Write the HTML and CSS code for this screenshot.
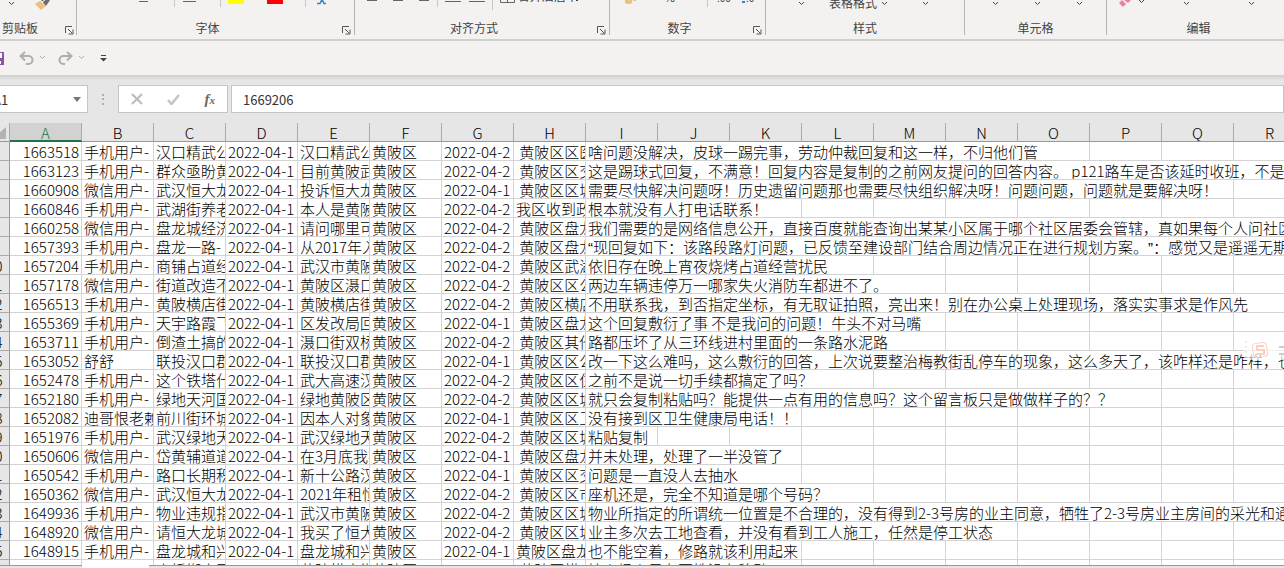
FILE: index.html
```html
<!DOCTYPE html>
<html lang="zh-CN">
<head>
<meta charset="utf-8">
<title>工作表</title>
<link rel="stylesheet" href="styles.css">
</head>
<body>
<header class="ribbon">
  <section class="group g-clip">
    <svg class="tools" aria-hidden="true"><path class="chev" d="M9 2l2.500 2.500 2.500-2.500"/><path d="M35 4l6 6 5-4-6-5z" fill="#ebc07c"/><path d="M41 0l5 6 4-6z" fill="#6b6b6b"/><path d="M42 2l3-2" stroke="#fff"/></svg>
    <div class="caption"><span>剪贴板</span><button class="launch" aria-label="剪贴板设置"><svg viewBox="0 0 9 9"><path d="M.5 7V.5H7M3 3l4 4M8 3.500V8H3.500"/></svg></button></div>
  </section>
  <section class="group g-font">
    <svg class="tools" aria-hidden="true"><path d="M62 1.500h9M106 1.500h13" stroke="#666"/><path class="sep" d="M97.500 0v7M143.500 0v7M228.500 0v7"/><path d="M151 0h16v4h-16z" fill="#ff0"/><path d="M190 0h16v4h-16z" fill="#f00"/><path d="M240 3.500h3l2-4 2 4h2" fill="none" stroke="#3f7fc4" stroke-width="1.500"/></svg>
    <div class="caption"><span>字体</span><button class="launch" aria-label="字体设置"><svg viewBox="0 0 9 9"><path d="M.5 7V.5H7M3 3l4 4M8 3.500V8H3.500"/></svg></button></div>
  </section>
  <section class="group g-align">
    <svg class="tools" aria-hidden="true"><path d="M12 .5h10M38 .5h10M64 .5h10M90 1.500h16M114 1.500h16" stroke="#666"/><path class="sep" d="M82.500 0v7M137.500 0v10"/><path d="M145.500 0v2.500h14V0M152.500 0v2" fill="none" stroke="#666"/><text x="163" y="1">合并后居中</text><path class="chev" d="M220-1l2 2 2-2"/></svg>
    <div class="caption"><span>对齐方式</span><button class="launch" aria-label="对齐设置"><svg viewBox="0 0 9 9"><path d="M.5 7V.5H7M3 3l4 4M8 3.500V8H3.500"/></svg></button></div>
  </section>
  <section class="group g-num">
    <svg class="tools" aria-hidden="true"><path d="M15 0h7v3l-2 1h-3l-2-1zM23 0h3v1h-3z" fill="#ebc07c"/><text x="54" y="2">%</text><path class="sep" d="M97.500 0v7"/><text x="107" y="2" font-size="10">.00</text><path d="M132 2h3" stroke="#3f7fc4" stroke-width="2"/><text x="136" y="2" font-size="10">.0</text></svg>
    <div class="caption"><span>数字</span><button class="launch" aria-label="数字设置"><svg viewBox="0 0 9 9"><path d="M.5 7V.5H7M3 3l4 4M8 3.500V8H3.500"/></svg></button></div>
  </section>
  <section class="group g-style">
    <svg class="tools" aria-hidden="true"><path class="chev" d="M33 2l2.500 2.500L38 2M116 2l2.500 2.500L121 2M157 2l2.500 2.500L162 2"/><text x="63" y="8">表格格式</text></svg>
    <div class="caption"><span>样式</span></div>
  </section>
  <section class="group g-cell">
    <svg class="tools" aria-hidden="true"><path class="chev" d="M28 2l2.500 2.500L33 2M70 2l2.500 2.500L75 2M112 2l2.500 2.500L117 2"/></svg>
    <div class="caption"><span>单元格</span></div>
  </section>
  <section class="group g-edit">
    <svg class="tools" aria-hidden="true"><path d="M12 3l4 4 3-3-4-4zM17 0l4 3 3-3z" fill="#e8819a"/><path class="chev" d="M32 0l2.500 2.500L37 0M77 2l2.500 2.500L82 2M142 2l2.500 2.500L147 2"/></svg>
    <div class="caption"><span>编辑</span></div>
  </section>
</header>
<nav class="quick" aria-label="快速访问工具栏">
  <button class="save" aria-label="保存"><svg width="4" height="13"><path d="M0 0h4v13H0z" fill="#8a55a8"/><path d="M0 1h2v5H0zM0 9h1v3H0z" fill="#fff"/></svg></button>
  <button class="undo" aria-label="撤消"><svg width="28" height="15"><path d="M6 1L1.500 5 6 9.500M2 5h7.500a4 4 0 0 1 0 8H7" class="arrow"/><path d="M21 5l2.500 2.500L26 5" class="soft"/></svg></button>
  <button class="redo" aria-label="恢复"><svg width="28" height="15"><path d="M9 1l4.500 4L9 9.500M13 5H5.500a4 4 0 0 0 0 8H7" class="arrow"/><path d="M21 5l2.500 2.500L26 5" class="soft"/></svg></button>
  <button class="more" aria-label="自定义快速访问工具栏"><svg width="7" height="7"><path d="M1 .5h5" stroke="#444"/><path d="M0 3h7L3.500 6.500z" fill="#444"/></svg></button>
</nav>
<div class="formula">
  <div class="namebox"><input class="name" value="A1" aria-label="名称框"><svg width="8" height="5" aria-hidden="true"><path d="M0 0h8L4 5z" fill="#777"/></svg></div>
  <svg class="dots" width="3" height="11" aria-hidden="true"><path d="M0 0h2v2H0zM0 4h2v2H0zM0 9h2v2H0z" fill="#b0b0b0"/></svg>
  <div class="actions">
    <button aria-label="取消"><svg width="12" height="12"><path d="M1 1l10 10M11 1L1 11" stroke="#bbb" stroke-width="2"/></svg></button>
    <button aria-label="输入"><svg width="13" height="11"><path d="M1 6l3.500 4L12 1" fill="none" stroke="#c4c4c4" stroke-width="2.500"/></svg></button>
    <button class="fx" aria-label="插入函数"><i>f<small>x</small></i></button>
  </div>
  <input class="value" value="1669206" aria-label="编辑栏">
</div>
<main class="sheet">
<table>
<colgroup><col class="numcol"><col span="17"></colgroup>
<thead><tr><th class="corner"><svg width="14" height="12" aria-hidden="true"><path d="M14 0v12H0z" fill="#b3b3b3"/></svg><th class="active">A<th>B<th>C<th>D<th>E<th>F<th>G<th>H<th>I<th>J<th>K<th>L<th>M<th>N<th>O<th>P<th>Q<th>R</tr></thead>
<tbody>
<tr><th>4<td>1663518<td>手机用户-<td>汉口精武公<td>2022-04-1<td>汉口精武公<td>黄陂区<td>2022-04-2<td>&nbsp;黄陂区区医<td colspan="7">啥问题没解决，皮球一踢完事，劳动仲裁回复和这一样，不归他们管<td><td><td></tr>
<tr><th>5<td>1663123<td>手机用户-<td>群众亟盼黄<td>2022-04-1<td>目前黄陂武<td>黄陂区<td>2022-04-2<td>&nbsp;黄陂区区交<td colspan="10">这是踢球式回复，不满意！回复内容是复制的之前网友提问的回答内容。 p121路车是否该延时收班，不是</tr>
<tr><th>6<td>1660908<td>微信用户-<td>武汉恒大龙<td>2022-04-1<td>投诉恒大龙<td>黄陂区<td>2022-04-1<td>&nbsp;黄陂区区城<td colspan="9">需要尽快解决问题呀！历史遗留问题那也需要尽快组织解决呀！问题问题，问题就是要解决呀！<td></tr>
<tr><th>7<td>1660846<td>手机用户-<td>武湖街养老<td>2022-04-1<td>本人是黄陂<td>黄陂区<td>2022-04-2<td>我区收到政<td colspan="3">根本就没有人打电话联系！<td><td><td><td><td><td><td></tr>
<tr><th>8<td>1660258<td>微信用户-<td>盘龙城经济<td>2022-04-1<td>请问哪里可<td>黄陂区<td>2022-04-2<td>&nbsp;黄陂区盘龙<td colspan="10">我们需要的是网络信息公开，直接百度就能查询出某某小区属于哪个社区居委会管辖，真如果每个人问社区</tr>
<tr><th>9<td>1657393<td>手机用户-<td>盘龙一路-<td>2022-04-1<td>从2017年入<td>黄陂区<td>2022-04-2<td>&nbsp;黄陂区盘龙<td colspan="10"><span class="quote">“</span>现回复如下：该路段路灯问题，已反馈至建设部门结合周边情况正在进行规划方案。<span class="quote">”</span>：感觉又是遥遥无期</tr>
<tr><th>10<td>1657204<td>手机用户-<td>商铺占道经<td>2022-04-1<td>武汉市黄陂<td>黄陂区<td>2022-04-2<td>&nbsp;黄陂区武湖<td colspan="4">依旧存在晚上宵夜烧烤占道经营扰民<td><td><td><td><td><td></tr>
<tr><th>11<td>1657178<td>微信用户-<td>街道改造不<td>2022-04-1<td>黄陂区滠口<td>黄陂区<td>2022-04-2<td>&nbsp;黄陂区区公<td colspan="5">两边车辆违停万一哪家失火消防车都进不了。<td><td><td><td><td></tr>
<tr><th>12<td>1656513<td>手机用户-<td>黄陂横店街<td>2022-04-1<td>黄陂横店街<td>黄陂区<td>2022-04-2<td>&nbsp;黄陂区横店<td colspan="10">不用联系我，到否指定坐标，有无取证拍照，亮出来！别在办公桌上处理现场，落实实事求是作风先</tr>
<tr><th>13<td>1655369<td>手机用户-<td>天宇路霞飞<td>2022-04-1<td>区发改局回<td>黄陂区<td>2022-04-1<td>&nbsp;黄陂区盘龙<td colspan="5">这个回复敷衍了事 不是我问的问题！牛头不对马嘴<td><td><td><td><td></tr>
<tr><th>14<td>1653711<td>手机用户-<td>倒渣土搞的<td>2022-04-1<td>滠口街双桥<td>黄陂区<td>2022-04-2<td>&nbsp;黄陂区其他<td colspan="5">路都压坏了从三环线进村里面的一条路水泥路<td><td><td><td><td></tr>
<tr><th>15<td>1653052<td>舒舒<td>联投汉口郡<td>2022-04-1<td>联投汉口郡<td>黄陂区<td>2022-04-1<td>&nbsp;黄陂区区公<td colspan="10">改一下这么难吗，这么敷衍的回答，上次说要整治梅教街乱停车的现象，这么多天了，该咋样还是咋样，也</tr>
<tr><th>16<td>1652478<td>手机用户-<td>这个铁塔什<td>2022-04-1<td>武大高速汉<td>黄陂区<td>2022-04-2<td>&nbsp;黄陂区区住<td colspan="4">之前不是说一切手续都搞定了吗？<td><td><td><td><td><td></tr>
<tr><th>17<td>1652180<td>手机用户-<td>绿地天河国<td>2022-04-1<td>绿地黄陂区<td>黄陂区<td>2022-04-2<td>&nbsp;黄陂区区城<td colspan="8">就只会复制粘贴吗？能提供一点有用的信息吗？这个留言板只是做做样子的？？<td><td></tr>
<tr><th>18<td>1652082<td>迪哥恨老赖<td>前川街环城<td>2022-04-1<td>因本人对象<td>黄陂区<td>2022-04-1<td>&nbsp;黄陂区区卫<td colspan="3">没有接到区卫生健康局电话！！<td><td><td><td><td><td><td></tr>
<tr><th>19<td>1651976<td>手机用户-<td>武汉绿地天<td>2022-04-1<td>武汉绿地天<td>黄陂区<td>2022-04-2<td>&nbsp;黄陂区区城<td>粘贴复制<td><td><td><td><td><td><td><td><td></tr>
<tr><th>20<td>1650606<td>微信用户-<td>岱黄辅道道<td>2022-04-1<td>在3月底我在<td>黄陂区<td>2022-04-1<td>&nbsp;黄陂区盘龙<td colspan="3">并未处理，处理了一半没管了<td><td><td><td><td><td><td></tr>
<tr><th>21<td>1650542<td>手机用户-<td>路口长期积<td>2022-04-1<td>新十公路汉<td>黄陂区<td>2022-04-1<td>&nbsp;黄陂区区交<td colspan="3">问题是一直没人去抽水<td><td><td><td><td><td><td></tr>
<tr><th>22<td>1650362<td>微信用户-<td>武汉恒大龙<td>2022-04-1<td>2021年租恒<td>黄陂区<td>2022-04-2<td>&nbsp;黄陂区区市<td colspan="4">座机还是，完全不知道是哪个号码？<td><td><td><td><td><td></tr>
<tr><th>23<td>1649936<td>手机用户-<td>物业违规指<td>2022-04-1<td>武汉市黄陂<td>黄陂区<td>2022-04-2<td>&nbsp;黄陂区区城<td colspan="10">物业所指定的所谓统一位置是不合理的，没有得到2-3号房的业主同意，牺牲了2-3号房业主房间的采光和通</tr>
<tr><th>24<td>1648920<td>微信用户-<td>请恒大龙城<td>2022-04-1<td>我买了恒大<td>黄陂区<td>2022-04-2<td>&nbsp;黄陂区区城<td colspan="6">业主多次去工地查看，并没有看到工人施工，任然是停工状态<td><td><td><td></tr>
<tr><th>25<td>1648915<td>手机用户-<td>盘龙城和兴<td>2022-04-1<td>盘龙城和兴<td>黄陂区<td>2022-04-1<td>黄陂区盘龙<td colspan="3">也不能空着，修路就该利用起来<td><td><td><td><td><td><td></tr>
<tr><th>26<td><td><td>小桥街小区<td><td>黄陂横店街<td>黄陂区<td><td>&nbsp;黄陂区横店<td colspan="3">接么场么只有不性没有移动<td><td><td><td><td><td><td></tr>
</tbody>
</table>
<div class="ime" aria-hidden="true"><svg width="40" height="20"><path d="M2 1v2M2 6v2M2 11v2M2 16v1" stroke="#ddd"/><g fill="none" stroke="#fbd0c0" stroke-width="2"><rect x="9" y="3" width="14" height="14" rx="3" stroke-width="1" transform="rotate(-8 16 10)"/><path d="M20 6h-7v4h7v4h-8"/></g><path d="M35 7h5M35 14h5" stroke="#ccc" stroke-width="2"/></svg></div>
</main>
<footer class="tabs"><span class="tab"></span></footer>
</body>
</html>
```

FILE: styles.css
```css
* { box-sizing: border-box; }
body {
  margin: 0;
  height: 100vh;
  display: flex;
  flex-direction: column;
  overflow: hidden;
  background: #e6e6e6;
  color: #000;
  font-family: "Noto Sans CJK SC", sans-serif;
}
button, input { border: 0; padding: 0; background: none; font-family: inherit; }
svg { display: block; }

.ribbon {
  flex: none;
  display: flex;
  height: 41px;
  padding-bottom: 4px;
  background: #f3f2f1;
  border-bottom: 2px solid #d2d0ce;
  color: #444;
}
.group {
  flex: none;
  display: flex;
  flex-direction: column;
  justify-content: space-between;
  border-right: 1px solid #b8b6b4;
}
.g-clip { width: 77px; }
.g-font { width: 278px; }
.g-align { width: 255px; }
.g-num { width: 156px; }
.g-style { width: 199px; }
.g-cell { width: 142px; }
.g-edit { flex: 1; border: 0; }
.tools { width: 100%; height: 12px; overflow: hidden; font-size: 12px; fill: #444; }
.chev { fill: none; stroke: #444; }
.sep { stroke: #c8c6c4; }
.caption { display: flex; align-items: flex-end; height: 20px; font-size: 12px; line-height: 14px; }
.caption span { flex: 1; text-align: center; }
.g-clip span { text-align: left; padding-left: 2px; }
.g-edit span { padding-left: 6px; }
.launch { width: 16px; height: 9px; padding-left: 4px; }
.g-clip .launch { width: 15px; }
.launch svg { width: 9px; height: 9px; fill: none; stroke: #555; }

.quick { flex: none; display: flex; align-items: center; height: 34px; background: #f3f2f1; }
.undo { margin-left: 15px; }
.redo { margin-left: 11px; }
.more { margin-left: 14px; }
.arrow { fill: none; stroke: #b0aeac; stroke-width: 2; }
.soft { fill: none; stroke: #b0aeac; }

.formula {
  flex: none;
  display: flex;
  align-items: center;
  height: 48px;
  padding-top: 10px;
  padding-bottom: 10px;
  background: linear-gradient(#cecece, #e6e6e6 5px);
}
.namebox, .actions, .value { height: 28px; background: #fff; border: 1px solid #c6c6c6; }
.namebox { display: flex; align-items: center; width: 96px; margin-left: -8px; padding: 0 6px 0 0; }
.name { flex: 1; min-width: 0; font-size: 13px; color: #333; }
.dots { margin: 0 13px 0 14px; }
.actions { display: flex; justify-content: space-around; align-items: center; width: 110px; margin-right: 3px; }
.fx { font-family: "Liberation Serif", serif; font-size: 15px; font-weight: 700; color: #666; }
.fx small { font-size: 11px; }
.value { flex: 1; min-width: 0; padding-left: 11px; font-size: 13px; color: #333; }

.sheet { flex: 1; min-height: 0; overflow: hidden; position: relative; background: #fff; }
table {
  table-layout: fixed;
  width: 1326px;
  margin-left: -20px;
  border-collapse: separate;
  border-spacing: 0;
  font-size: 15px;
  font-weight: 300;
  text-spacing-trim: space-all;
}
col { width: 72px; }
.numcol { width: 30px; }
tr { height: 19px; }
th, td {
  height: 19px;
  padding: 0 0 0 2px;
  line-height: 18px;
  overflow: hidden;
  white-space: nowrap;
  font-weight: inherit;
  border-right: 1px solid #d4d4d4;
  border-bottom: 1px solid #d4d4d4;
}
tbody th, tbody td { padding-top: 2px; line-height: 16px; }
td:nth-child(2) { text-align: right; padding: 2px 2px 0 0; }
th { background: #e6e6e6; padding: 0; text-align: center; }
thead th {
  padding-top: 2px;
  line-height: 16px;
  border-right-color: #ababab;
  border-bottom-color: #999;
}
tbody th { border-right-color: #999; border-bottom-color: #ababab; }
.corner svg { margin-left: 12px; }
.active { background: #d2d2d2; color: #217346; border-bottom: 2px solid #217346; line-height: 15px; }
.quote { font-family: "Liberation Sans", sans-serif; line-height: 1; }
.ime {
  position: absolute;
  right: 0;
  top: 217px;
  background: rgba(255, 255, 255, .6);
}

.tabs { flex: none; height: 3px; border-top: 1px solid #999; background: #e6e6e6; }
.tab { display: block; width: 67px; height: 3px; margin: -1px 0 0 82px; background: #fff; }
```
